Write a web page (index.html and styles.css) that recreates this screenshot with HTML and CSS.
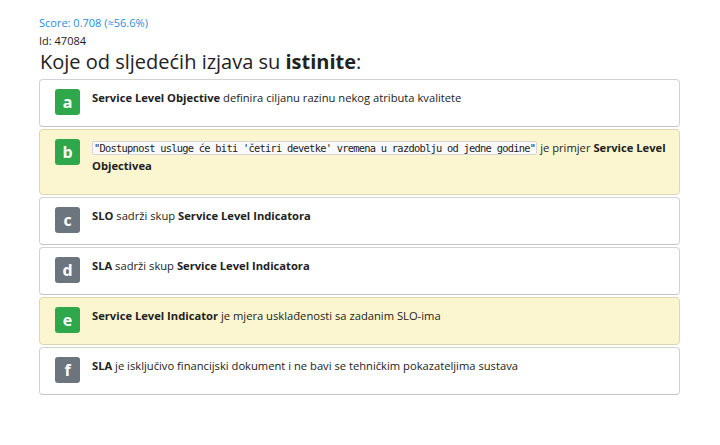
FILE: index.html
```html
<!DOCTYPE html>
<html>
<head>
<meta charset="utf-8">
<link rel="stylesheet" href="styles.css">
</head>
<body>
<div class="page">
  <div class="score">Score: 0.708 (≈56.6%)</div>
  <div class="id">Id: 47084</div>
  <h1 class="title">Koje od sljedećih izjava su <b>istinite</b>:</h1>
  <div class="list">
    <div class="card">
      <span class="badge green">a</span>
      <div class="text"><b>Service Level Objective</b> definira ciljanu razinu nekog atributa kvalitete</div>
    </div>
    <div class="card yellow">
      <span class="badge green">b</span>
      <div class="text"><code>"Dostupnost usluge će biti 'četiri devetke' vremena u razdoblju od jedne godine"</code> je primjer <b>Service Level Objectivea</b></div>
    </div>
    <div class="card">
      <span class="badge grey">c</span>
      <div class="text"><b>SLO</b> sadrži skup <b>Service Level Indicatora</b></div>
    </div>
    <div class="card">
      <span class="badge grey">d</span>
      <div class="text"><b>SLA</b> sadrži skup <b>Service Level Indicatora</b></div>
    </div>
    <div class="card yellow">
      <span class="badge green">e</span>
      <div class="text"><b>Service Level Indicator</b> je mjera usklađenosti sa zadanim SLO-ima</div>
    </div>
    <div class="card">
      <span class="badge grey">f</span>
      <div class="text"><b>SLA</b> je isključivo financijski dokument i ne bavi se tehničkim pokazateljima sustava</div>
    </div>
  </div>
</div>
</body>
</html>
```
FILE: styles.css
```css
html, body {
  margin: 0;
  padding: 0;
  background: #ffffff;
}
body {
  font-family: "Open Sans", "Noto Sans", sans-serif;
  color: #222;
}
.page {
  padding: 15px 40px 0 39px;
}
.score {
  font-size: 11px;
  line-height: 16px;
  color: #2a8fd8;
}
.id {
  font-size: 11px;
  line-height: 16px;
  color: #222;
  margin-top: 2px;
}
.title {
  font-size: 20px;
  font-weight: 400;
  line-height: 26px;
  margin: 0 0 4px 1px;
  color: #222;
}
.title b {
  font-weight: 700;
}
.list {
  display: flex;
  flex-direction: column;
  gap: 2px;
}
.card {
  display: flex;
  align-items: flex-start;
  gap: 12px;
  padding: 9px 4px 9px 15px;
  border: 1px solid #d2d2d2;
  border-bottom-color: #c4c4c4;
  border-radius: 4px;
  background: #fff;
}
.card.yellow {
  background: #fcf6d0;
  border-color: #dcd6b4;
}
.badge {
  flex: 0 0 auto;
  width: 25px;
  height: 26px;
  border-radius: 3px;
  color: #fff;
  font-weight: 700;
  font-size: 16px;
  line-height: 26px;
  text-align: center;
}
.badge.green { background: #2ea84a; }
.badge.grey { background: #6c757d; }
.text {
  font-size: 11.2px;
  line-height: 18px;
  margin-bottom: 10px;
}
.text b { font-weight: 700; }
code {
  font-family: "DejaVu Sans Mono", monospace;
  font-size: 10.4px;
  letter-spacing: -0.74px;
  background: #fafafa;
  border: 1px solid #d6d6d6;
  border-radius: 2px;
  padding: 0 1px;
}
```
